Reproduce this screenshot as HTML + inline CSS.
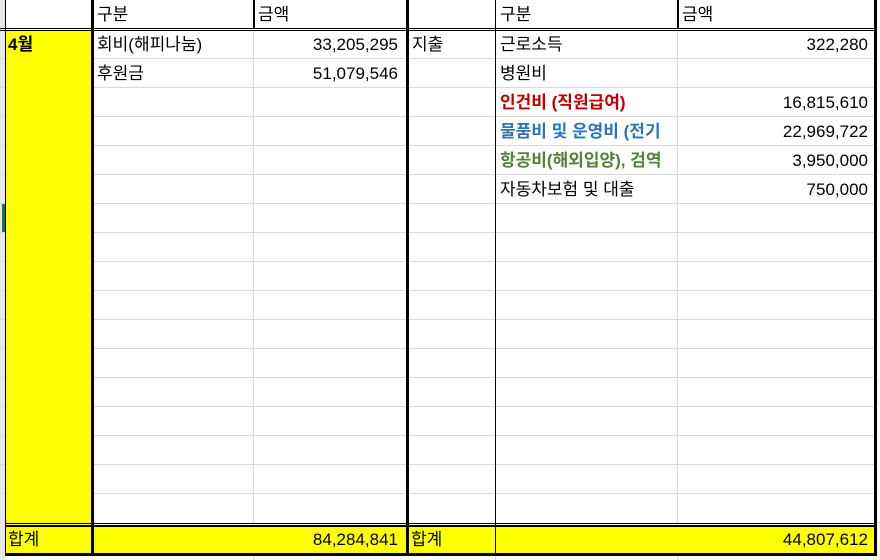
<!DOCTYPE html>
<html><head><meta charset="utf-8"><style>
body{margin:0;width:880px;height:560px;background:#fff;position:relative;overflow:hidden;font-family:"Liberation Sans","Noto Sans CJK KR",sans-serif;font-size:17px;color:#000}
div{position:absolute;box-sizing:border-box}
.h{height:1px;background:#dadada}
.v{width:1px;background:#dadada}
.k{background:#000}
.t{line-height:29px;white-space:nowrap;overflow:hidden}
.r{text-align:right}
.b{font-weight:bold}
</style></head><body>
<div style="left:0;top:0;width:5px;height:560px;background:#e8e8e8"></div>
<div style="left:2px;top:204px;width:3px;height:29px;background:#217346"></div>
<div style="left:6px;top:31px;width:86px;height:522px;background:#ff0"></div>
<div style="left:6px;top:526px;width:868px;height:27px;background:#ff0"></div>

<div class="h" style="left:0;top:58px;width:6px"></div><div class="h" style="left:94px;top:58px;width:781px"></div>
<div class="h" style="left:0;top:87px;width:6px"></div><div class="h" style="left:94px;top:87px;width:781px"></div>
<div class="h" style="left:0;top:116px;width:6px"></div><div class="h" style="left:94px;top:116px;width:781px"></div>
<div class="h" style="left:0;top:145px;width:6px"></div><div class="h" style="left:94px;top:145px;width:781px"></div>
<div class="h" style="left:0;top:174px;width:6px"></div><div class="h" style="left:94px;top:174px;width:781px"></div>
<div class="h" style="left:0;top:203px;width:6px"></div><div class="h" style="left:94px;top:203px;width:781px"></div>
<div class="h" style="left:0;top:232px;width:6px"></div><div class="h" style="left:94px;top:232px;width:781px"></div>
<div class="h" style="left:0;top:261px;width:6px"></div><div class="h" style="left:94px;top:261px;width:781px"></div>
<div class="h" style="left:0;top:290px;width:6px"></div><div class="h" style="left:94px;top:290px;width:781px"></div>
<div class="h" style="left:0;top:319px;width:6px"></div><div class="h" style="left:94px;top:319px;width:781px"></div>
<div class="h" style="left:0;top:348px;width:6px"></div><div class="h" style="left:94px;top:348px;width:781px"></div>
<div class="h" style="left:0;top:377px;width:6px"></div><div class="h" style="left:94px;top:377px;width:781px"></div>
<div class="h" style="left:0;top:406px;width:6px"></div><div class="h" style="left:94px;top:406px;width:781px"></div>
<div class="h" style="left:0;top:435px;width:6px"></div><div class="h" style="left:94px;top:435px;width:781px"></div>
<div class="h" style="left:0;top:464px;width:6px"></div><div class="h" style="left:94px;top:464px;width:781px"></div>
<div class="h" style="left:0;top:493px;width:6px"></div><div class="h" style="left:94px;top:493px;width:781px"></div>
<div class="v" style="left:253px;top:31px;height:492px"></div>
<div class="v" style="left:677px;top:31px;height:492px"></div>
<div class="v" style="left:253px;top:556px;height:4px"></div>
<div class="v" style="left:677px;top:556px;height:4px"></div>
<div class="v" style="left:495px;top:556px;height:4px"></div>

<div class="k" style="left:0;top:28px;width:877px;height:1px"></div>
<div class="k" style="left:0;top:30px;width:877px;height:1px"></div>
<div class="k" style="left:5px;top:0;width:1px;height:556px"></div>
<div class="k" style="left:91px;top:0;width:3px;height:556px"></div>
<div class="k" style="left:253px;top:0;width:2px;height:29px"></div>
<div class="k" style="left:406px;top:0;width:3px;height:556px"></div>
<div class="k" style="left:495px;top:0;width:1px;height:556px"></div>
<div class="k" style="left:677px;top:0;width:2px;height:29px"></div>
<div class="k" style="left:874px;top:0;width:3px;height:556px"></div>
<div class="k" style="left:5px;top:523px;width:872px;height:1px"></div>
<div class="k" style="left:5px;top:525px;width:872px;height:2px"></div>
<div class="k" style="left:5px;top:553px;width:872px;height:3px"></div>

<div class="t" style="left:97px;top:0">구분</div>
<div class="t" style="left:258px;top:0">금액</div>
<div class="t" style="left:500px;top:0">구분</div>
<div class="t" style="left:682px;top:0">금액</div>

<div class="t b" style="left:8px;top:30px">4월</div>
<div class="t" style="left:97px;top:30px">회비(해피나눔)</div>
<div class="t r" style="left:255px;top:30px;width:143px">33,205,295</div>
<div class="t" style="left:97px;top:59px">후원금</div>
<div class="t r" style="left:255px;top:59px;width:143px">51,079,546</div>

<div class="t" style="left:412px;top:30px">지출</div>
<div class="t" style="left:500px;top:30px">근로소득</div>
<div class="t r" style="left:680px;top:30px;width:188px">322,280</div>
<div class="t" style="left:500px;top:59px">병원비</div>
<div class="t b" style="left:500px;top:88px;color:#c00000">인건비 (직원급여)</div>
<div class="t r" style="left:680px;top:88px;width:188px">16,815,610</div>
<div class="t b" style="left:500px;top:117px;width:177px;color:#2e75b6">물품비 및 운영비 (전기</div>
<div class="t r" style="left:680px;top:117px;width:188px">22,969,722</div>
<div class="t b" style="left:500px;top:146px;width:177px;color:#548235">항공비(해외입양), 검역</div>
<div class="t r" style="left:680px;top:146px;width:188px">3,950,000</div>
<div class="t" style="left:500px;top:175px">자동차보험 및 대출</div>
<div class="t r" style="left:680px;top:175px;width:188px">750,000</div>

<div class="t" style="left:8px;top:525px">합계</div>
<div class="t r" style="left:255px;top:525px;width:143px">84,284,841</div>
<div class="t" style="left:411px;top:525px">합계</div>
<div class="t r" style="left:680px;top:525px;width:188px">44,807,612</div>
</body></html>
